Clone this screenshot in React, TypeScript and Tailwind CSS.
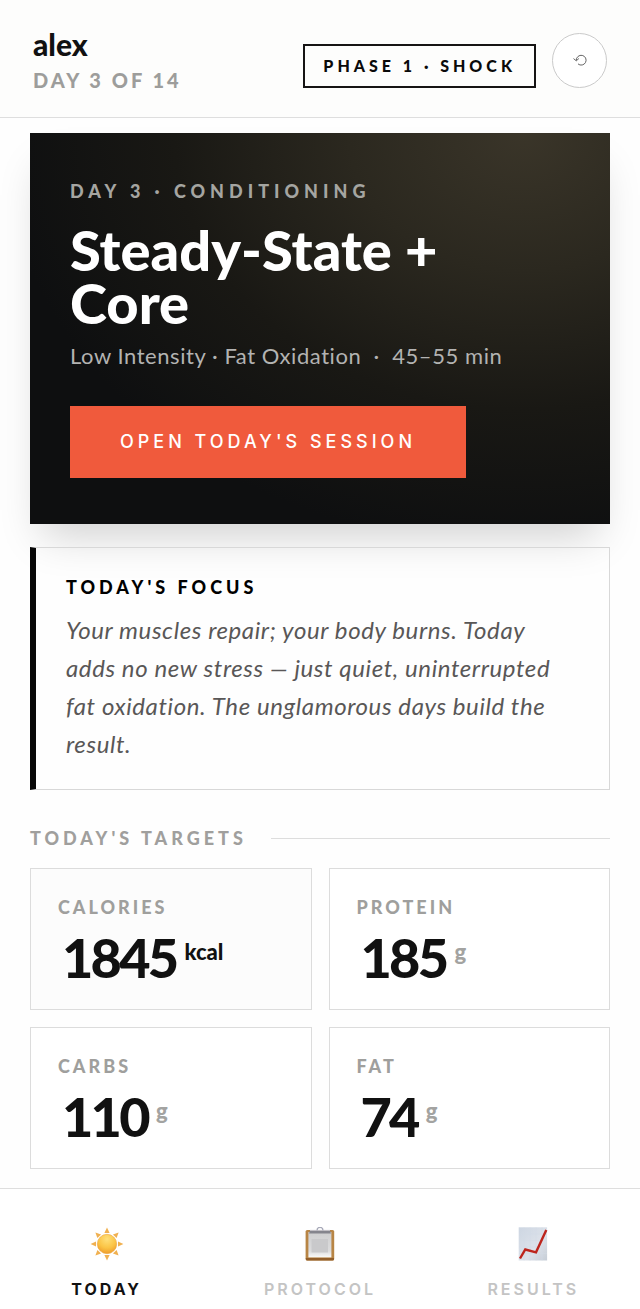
import { useState } from 'react';
import clsx from 'clsx';

interface Target {
  label: string;
  value: string;
  unit: string;
  primary?: boolean;
}

const targets: Target[] = [
  { label: 'Calories', value: '1845', unit: 'kcal', primary: true },
  { label: 'Protein', value: '185', unit: 'g' },
  { label: 'Carbs', value: '110', unit: 'g' },
  { label: 'Fat', value: '74', unit: 'g' },
];

function SunIcon() {
  return (
    <svg viewBox="0 0 34 34" className="h-[34px] w-[34px]" aria-hidden="true">
      <defs>
        <radialGradient id="sun" cx="50%" cy="25%" r="75%">
          <stop offset="0" stopColor="#ffe07a" />
          <stop offset="0.6" stopColor="#fbc445" />
          <stop offset="1" stopColor="#ee9c2c" />
        </radialGradient>
      </defs>
      {[0, 45, 90, 135, 180, 225, 270, 315].map((angle) => (
        <path key={angle} d="M14.4 6 17 0.6 19.6 6Z" fill="#f0b050" transform={`rotate(${angle} 17 17)`} />
      ))}
      <circle cx="17" cy="17" r="9.7" fill="url(#sun)" stroke="#eba53a" strokeWidth="0.6" />
    </svg>
  );
}

function ClipboardIcon() {
  return (
    <svg viewBox="0 0 34 34" className="h-[34px] w-[34px]" aria-hidden="true">
      <defs>
        <linearGradient id="paper" x1="0" y1="0" x2="0" y2="1">
          <stop offset="0" stopColor="#cfcfd0" />
          <stop offset="0.75" stopColor="#dcdcdd" />
          <stop offset="1" stopColor="#fafafa" />
        </linearGradient>
      </defs>
      <rect x="2.6" y="3" width="28.6" height="30.5" rx="1.6" fill="#b88545" />
      <path d="M2.8 31h28.2v1a1.6 1.6 0 0 1-1.6 1.5h-25a1.6 1.6 0 0 1-1.6-1.5Z" fill="#935f2b" />
      <rect x="5.4" y="5" width="23" height="25.4" fill="url(#paper)" />
      <rect x="8.5" y="12" width="16.5" height="13.5" fill="#c9c9cb" />
      <path d="M7 3.4h20l1 3H6Z" fill="#85858d" />
      <path d="M7 3.4h20" stroke="#c8c8d0" strokeWidth="1" />
      <path d="M14 3.4a3 3 0 0 1 6 0" fill="none" stroke="#a7a9b8" strokeWidth="1.3" />
    </svg>
  );
}

function ChartIcon() {
  return (
    <svg viewBox="0 0 34 34" className="h-[34px] w-[34px]" aria-hidden="true">
      <defs>
        <linearGradient id="sheet" x1="0" y1="0" x2="1" y2="1">
          <stop offset="0" stopColor="#cdd6e2" />
          <stop offset="0.6" stopColor="#dde2ea" />
          <stop offset="1" stopColor="#c6cdd6" />
        </linearGradient>
      </defs>
      <rect x="2.7" y="0.3" width="28.4" height="33.2" fill="url(#sheet)" />
      <path d="M8 0.5v33M14 0.5v33M20 0.5v33M26 0.5v33M3 7h28M3 13.500h28M3 20h28M3 26.500h28" stroke="#d3dae4" strokeWidth="0.5" />
      <path d="M4 31.500 9.300 22.500 20 25.300 30.300 3" fill="none" stroke="#bd251d" strokeWidth="2.4" />
    </svg>
  );
}

const tabs = [
  { id: 'today', label: 'Today', Icon: SunIcon },
  { id: 'protocol', label: 'Protocol', Icon: ClipboardIcon },
  { id: 'results', label: 'Results', Icon: ChartIcon },
];

function Header() {
  return (
    <header className="flex items-center justify-between border-b border-[#dedede] bg-[#fdfdfc] px-[33px] pt-7 pb-[25px]">
      <div>
        <p className="text-3xl leading-8 font-black text-[#111111]">alex</p>
        <p className="mt-2 text-xl leading-6 font-black tracking-[3px] text-[#9d9d9b] uppercase">Day 3 of 14</p>
      </div>
      <div className="flex items-end gap-4">
        <span className="border-2 border-[#161414] px-[18px] py-1.5 text-base leading-7 font-black tracking-[4px] text-[#0a0a0a] uppercase">
          Phase 1 · Shock
        </span>
        <button
          type="button"
          aria-label="Reset"
          className="flex h-[55px] w-[55px] items-center justify-center rounded-full border border-[#cacaca] bg-white"
        >
          <svg viewBox="0 0 14 12" className="h-3 w-3.5" fill="none" stroke="#666666" strokeWidth="1" aria-hidden="true">
            <path d="M3.300 6.400A4.900 4.900 0 1 1 5 9.900" />
            <path d="M0.500 4.600 3.300 6.800 5.900 4.500" />
          </svg>
        </button>
      </div>
    </header>
  );
}

function SessionHero() {
  return (
    <section className="bg-[#0e0f10] bg-[radial-gradient(ellipse_at_85%_0%,#3a3529_0%,#2b281f_25%,#191814_50%,transparent_75%)] px-10 py-[46px] shadow-[0_24px_40px_-12px_rgba(0,0,0,0.18)]">
      <p className="text-lg leading-6 font-black tracking-[5px] text-[#a5a5a1] uppercase">Day 3 · Conditioning</p>
      <h1 className="mt-5 max-w-[400px] text-[56px] leading-[53px] font-black text-white">Steady-State + Core</h1>
      <p className="mt-[11px] text-[22px] leading-8 tracking-wide text-[#b3b3b2]">
        Low Intensity · Fat Oxidation &nbsp;·&nbsp; 45–55 min
      </p>
      <button
        type="button"
        className="mt-[34px] bg-[#f05a3c] px-[50px] py-5 font-[Inter,sans-serif] text-lg leading-8 font-medium tracking-[4px] text-white uppercase"
      >
        Open today's session
      </button>
    </section>
  );
}

function FocusCard() {
  return (
    <section className="mt-[23px] border border-l-[6px] border-[#d8d8d8] border-l-[#070707] pt-[27px] pr-10 pb-[26px] pl-[30px]">
      <h2 className="text-lg leading-6 font-black tracking-[4px] text-black uppercase">Today's focus</h2>
      <p className="mt-3 text-2xl leading-[38px] tracking-wide text-[#595757] italic">
        Your muscles repair; your body burns. Today adds no new stress — just quiet, uninterrupted fat oxidation. The
        unglamorous days build the result.
      </p>
    </section>
  );
}

function TargetCard({ target }: { target: Target }) {
  return (
    <div className={clsx('border border-[#dcdcdc] px-[27px] pt-[26px] pb-[23px]', target.primary ? 'bg-[#fcfcfc]' : 'bg-white')}>
      <dt className="text-lg leading-6 font-black tracking-[3px] text-[#9f9f9d] uppercase">{target.label}</dt>
      <dd className="mt-[11px] flex items-start gap-2 pl-1 text-[#111111]">
        <span className="text-[54px] leading-[56px] font-black tracking-tighter">{target.value}</span>
        <span className={clsx('pt-1.5 text-[22px] leading-8 font-black', !target.primary && 'text-[#a3a3a1]')}>
          {target.unit}
        </span>
      </dd>
    </div>
  );
}

export default function App() {
  const [activeTab, setActiveTab] = useState('today');

  return (
    <div className="flex min-h-screen flex-col bg-[#fefefe] font-[Lato,sans-serif]">
      <Header />

      <main className="px-[30px] pt-[15px] pb-[19px]">
        <SessionHero />
        <FocusCard />

        <div className="mt-9 flex items-center gap-6">
          <h2 className="text-lg leading-6 font-black tracking-[4px] text-[#a09f9d] uppercase">Today's targets</h2>
          <div className="h-px flex-1 bg-[#dddddd]" />
        </div>

        <dl className="mt-[18px] grid grid-cols-2 gap-[17px]">
          {targets.map((target) => (
            <TargetCard key={target.label} target={target} />
          ))}
        </dl>
      </main>

      <nav className="mt-auto grid grid-cols-3 border-t border-[#dedede] bg-white pt-[38px] pb-2 font-[Inter,sans-serif]">
        {tabs.map(({ id, label, Icon }) => (
          <button
            key={id}
            type="button"
            aria-current={activeTab === id ? 'page' : undefined}
            onClick={() => setActiveTab(id)}
            className={clsx(
              'flex flex-col items-center gap-4 text-base leading-6 tracking-[3px] uppercase',
              activeTab === id ? 'font-bold text-[#111111]' : 'font-semibold text-[#c4c4c4]'
            )}
          >
            <Icon />
            <span>{label}</span>
          </button>
        ))}
      </nav>
    </div>
  );
}
